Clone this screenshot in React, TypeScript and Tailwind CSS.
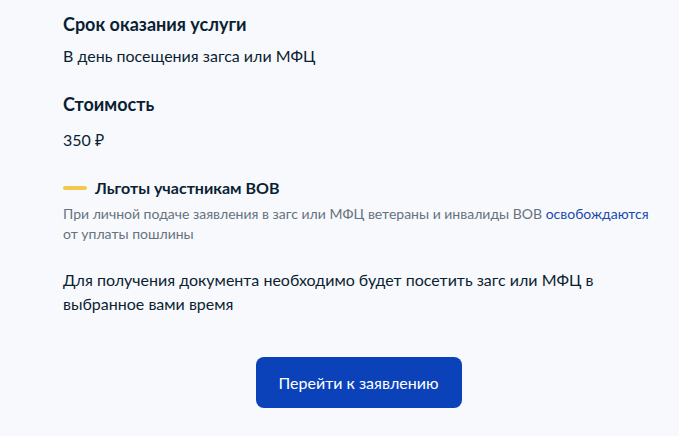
export default function App() {
  return (
    <div
      className="min-h-screen w-full bg-[#f8f9fc] text-[#0b1f33]"
      style={{ fontFamily: "Lato, 'Noto Sans', sans-serif" }}
    >
      <div className="pl-[63px] pr-6 pt-[12px]">
        <h3 className="text-[18px] leading-[24px] font-bold">Срок оказания услуги</h3>
        <p className="mt-[8px] text-[16px] leading-[24px]">В день посещения загса или МФЦ</p>

        <h3 className="mt-[24px] text-[18px] leading-[24px] font-bold">Стоимость</h3>
        <p className="mt-[12px] text-[16px] leading-[24px]">350 ₽</p>

        <div className="mt-[24px] flex items-center gap-[8px]">
          <span className="block w-[24px] h-[4px] rounded-full bg-[#f2c94c]" />
          <span className="text-[16px] leading-[24px] font-bold">Льготы участникам ВОВ</span>
        </div>
        <p className="mt-[4px] text-[14px] leading-[20px] text-[#66727f]">
          При личной подаче заявления в загс или МФЦ ветераны и инвалиды ВОВ{" "}
          <a className="text-[#1a49ad]">освобождаются</a> от уплаты пошлины
        </p>

        <p className="mt-[24px] max-w-[540px] text-[16px] leading-[24px]">
          Для получения документа необходимо будет посетить загс или МФЦ в выбранное вами время
        </p>
      </div>

      <div className="mt-[41px] flex justify-center pl-[38px]">
        <button className="h-[51px] w-[206px] rounded-[8px] bg-[#0c42b9] text-white text-[16px] leading-[24px]">
          Перейти к заявлению
        </button>
      </div>
    </div>
  );
}
